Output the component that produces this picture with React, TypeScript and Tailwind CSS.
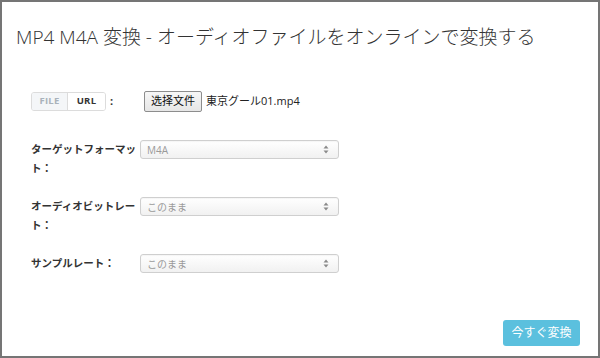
// MP4 → M4A converter form panel
const font = { fontFamily: '"Open Sans", "Noto Sans CJK JP", sans-serif' };

const SelectBox = ({ value }: { value: string }) => (
  <div className="w-[199px] h-[19px] flex items-center justify-between pl-[6px] pr-[9px] rounded-[3px] border border-[#cfcfcf] bg-gradient-to-b from-white to-[#f1f1f1] shadow-[inset_0_1px_1px_rgba(0,0,0,0.04)]">
    <span className="text-[10px] leading-none text-[#9a9a9a]">{value}</span>
    <svg width="6" height="9" viewBox="0 0 6 9" className="text-[#8a8a8a]">
      <path d="M3 0.5 L5.5 3.5 H0.5 Z" fill="currentColor" />
      <path d="M3 8.5 L5.5 5.5 H0.5 Z" fill="currentColor" />
    </svg>
  </div>
);

const FormRow = ({ label, value }: { label: string; value: string }) => (
  <div className="flex items-start">
    <div className="w-[109px] text-[10.5px] leading-[19px] font-bold text-[#333]">{label}</div>
    <SelectBox value={value} />
  </div>
);

export default function App() {
  return (
    <div
      className="w-[600px] h-[358px] border-2 border-[#757575] bg-white flex flex-col"
      style={font}
    >
      {/* Title */}
      <h1 className="pl-[14px] pt-[24px] text-[19px] leading-[23px] font-light text-[#333] whitespace-nowrap">
        MP4 M4A 変換 - オーディオファイルをオンラインで変換する
      </h1>

      <div className="pl-[29px] mt-[42px] flex flex-col">
        {/* File / URL source row */}
        <div className="flex items-center h-[21px]">
          <div className="flex h-[19px] rounded-[3px] border border-[#dcdcdc] text-[9.5px] font-bold overflow-hidden tracking-[0.3px]">
            <span className="w-[36px] flex items-center justify-center bg-[#f4f6f8] text-[#a9b2bb] border-r border-[#dcdcdc]">
              FILE
            </span>
            <span className="w-[37px] flex items-center justify-center bg-white text-[#333]">
              URL
            </span>
          </div>
          <span className="ml-[4px] w-[34px] text-[11px] font-bold text-[#333]">:</span>
          <button className="h-[21px] px-[6px] border border-[#8d8d8d] rounded-[2px] bg-gradient-to-b from-[#f7f7f7] to-[#e6e6e6] text-[11px] text-[#111]">
            选择文件
          </button>
          <span className="ml-[4px] text-[11px] text-[#222]">東京グール01.mp4</span>
        </div>

        <div className="mt-[28px] flex flex-col gap-[19px]">
          <FormRow label="ターゲットフォーマット：" value="M4A" />
          <FormRow label="オーディオビットレート：" value="このまま" />
          <FormRow label="サンプルレート：" value="このまま" />
        </div>
      </div>

      {/* Convert button */}
      <div className="mt-auto flex justify-end pr-[18px] pb-[10px]">
        <button className="w-[77px] h-[26px] rounded-[3px] bg-[#5bc0de] text-white text-[12px]">
          今すぐ変換
        </button>
      </div>
    </div>
  );
}
